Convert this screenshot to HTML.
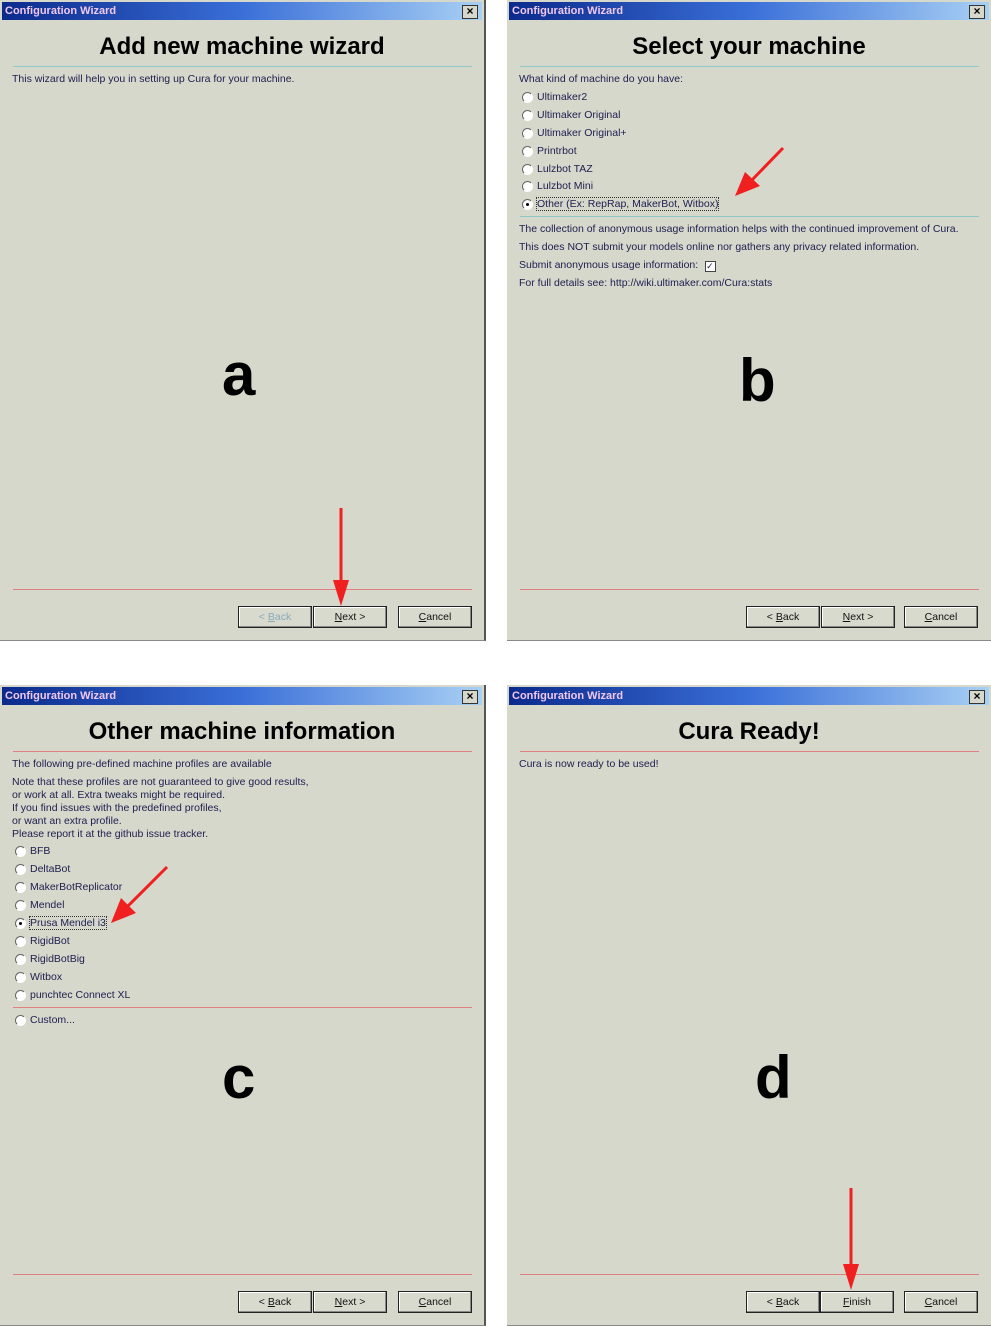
<!DOCTYPE html>
<html><head><meta charset="utf-8"><style>
body{margin:0;width:991px;height:1326px;background:#fff;position:relative;overflow:hidden;font-family:"Liberation Sans",sans-serif;}
.p{position:absolute;width:484px;height:640px;background:#d5d8cb;border-right:2px solid #555;border-bottom:1px solid #888;}
.tb{position:absolute;left:2px;top:2px;right:2px;height:18px;background:linear-gradient(90deg,#0b2a8c,#3a6fd8 50%,#a8d0f4);color:#f0c8f0;font-weight:bold;font-size:11px;line-height:18px;padding-left:3px;}
.x{position:absolute;right:4px;top:3px;width:14px;height:12px;background:#d5d8cb;border:1px solid #333;font-size:12px;line-height:11px;text-align:center;color:#000;font-weight:bold;}
.h{position:absolute;left:0;right:0;text-align:center;font-size:24px;font-weight:bold;color:#000;}
.ln{position:absolute;left:13px;right:12px;height:1px;background:#8cc8c8;}
.rl{position:absolute;left:13px;right:12px;height:1px;background:#e08080;}
.t{position:absolute;font-size:10.5px;color:#202050;white-space:nowrap;}
.r{position:absolute;width:9px;height:9px;border-radius:50%;border:1px solid #666;border-right-color:#fff;border-bottom-color:#fff;background:#fff;}
.r.on::after{content:"";position:absolute;left:3px;top:3px;width:3px;height:3px;background:#000;border-radius:50%;}
.b{position:absolute;width:72px;height:20px;border:1px solid #222;background:#d8dacd;font-size:10.5px;text-align:center;line-height:20px;color:#111;box-shadow:inset -1px -1px #888,inset 1px 1px #fff;}
.big{position:absolute;font-size:60px;font-weight:bold;color:#000;}
.arr{position:absolute;left:0;top:0;}
</style></head><body>

<div class="p" style="left:0;top:0">
<div class="tb">Configuration Wizard<div class="x">×</div></div>
<div class="h" style="top:33px">Add new machine wizard</div>
<div class="ln" style="top:66px"></div>
<div class="t" style="left:12px;top:73px">This wizard will help you in setting up Cura for your machine.</div>
<div class="big" style="left:222px;top:340px">a</div>
<div class="rl" style="top:589px"></div>
<div class="b" style="left:238px;top:606px;color:#8ab">&lt; <u>B</u>ack</div>
<div class="b" style="left:313px;top:606px"><u>N</u>ext &gt;</div>
<div class="b" style="left:398px;top:606px"><u>C</u>ancel</div>
</div>

<div class="p" style="left:507px;top:0">
<div class="tb">Configuration Wizard<div class="x">×</div></div>
<div class="h" style="top:33px">Select your machine</div>
<div class="ln" style="top:66px"></div>
<div class="t" style="left:12px;top:73px">What kind of machine do you have:</div>
<div class="r" style="left:15px;top:92px"></div><div class="t" style="left:30px;top:91px">Ultimaker2</div>
<div class="r" style="left:15px;top:110px"></div><div class="t" style="left:30px;top:109px">Ultimaker Original</div>
<div class="r" style="left:15px;top:128px"></div><div class="t" style="left:30px;top:127px">Ultimaker Original+</div>
<div class="r" style="left:15px;top:146px"></div><div class="t" style="left:30px;top:145px">Printrbot</div>
<div class="r" style="left:15px;top:164px"></div><div class="t" style="left:30px;top:163px">Lulzbot TAZ</div>
<div class="r" style="left:15px;top:181px"></div><div class="t" style="left:30px;top:180px">Lulzbot Mini</div>
<div class="r on" style="left:15px;top:199px"></div><div class="t" style="left:30px;top:198px;outline:1px dotted #333">Other (Ex: RepRap, MakerBot, Witbox)</div>
<div class="ln" style="top:216px"></div>
<div class="t" style="left:12px;top:223px">The collection of anonymous usage information helps with the continued improvement of Cura.</div>
<div class="t" style="left:12px;top:241px">This does NOT submit your models online nor gathers any privacy related information.</div>
<div class="t" style="left:12px;top:259px">Submit anonymous usage information: <span style="display:inline-block;width:9px;height:9px;border:1px solid #444;background:#fff;font-size:9px;line-height:9px;vertical-align:-1px;margin-left:4px">✓</span></div>
<div class="t" style="left:12px;top:277px">For full details see: http://wiki.ultimaker.com/Cura:stats</div>
<div class="big" style="left:232px;top:346px">b</div>
<div class="rl" style="top:589px"></div>
<div class="b" style="left:239px;top:606px">&lt; <u>B</u>ack</div>
<div class="b" style="left:314px;top:606px"><u>N</u>ext &gt;</div>
<div class="b" style="left:397px;top:606px"><u>C</u>ancel</div>
</div>

<div class="p" style="left:0;top:685px">
<div class="tb">Configuration Wizard<div class="x">×</div></div>
<div class="h" style="top:33px">Other machine information</div>
<div class="rl" style="top:66px"></div>
<div class="t" style="left:12px;top:73px">The following pre-defined machine profiles are available</div>
<div class="t" style="left:12px;top:91px;line-height:13px">Note that these profiles are not guaranteed to give good results,<br>or work at all. Extra tweaks might be required.<br>If you find issues with the predefined profiles,<br>or want an extra profile.<br>Please report it at the github issue tracker.</div>
<div class="r" style="left:15px;top:161px"></div><div class="t" style="left:30px;top:160px">BFB</div>
<div class="r" style="left:15px;top:179px"></div><div class="t" style="left:30px;top:178px">DeltaBot</div>
<div class="r" style="left:15px;top:197px"></div><div class="t" style="left:30px;top:196px">MakerBotReplicator</div>
<div class="r" style="left:15px;top:215px"></div><div class="t" style="left:30px;top:214px">Mendel</div>
<div class="r on" style="left:15px;top:233px"></div><div class="t" style="left:30px;top:232px;outline:1px dotted #333">Prusa Mendel i3</div>
<div class="r" style="left:15px;top:251px"></div><div class="t" style="left:30px;top:250px">RigidBot</div>
<div class="r" style="left:15px;top:269px"></div><div class="t" style="left:30px;top:268px">RigidBotBig</div>
<div class="r" style="left:15px;top:287px"></div><div class="t" style="left:30px;top:286px">Witbox</div>
<div class="r" style="left:15px;top:305px"></div><div class="t" style="left:30px;top:304px">punchtec Connect XL</div>
<div class="rl" style="top:322px"></div>
<div class="r" style="left:15px;top:330px"></div><div class="t" style="left:30px;top:329px">Custom...</div>
<div class="big" style="left:222px;top:358px">c</div>
<div class="rl" style="top:589px"></div>
<div class="b" style="left:238px;top:606px">&lt; <u>B</u>ack</div>
<div class="b" style="left:313px;top:606px"><u>N</u>ext &gt;</div>
<div class="b" style="left:398px;top:606px"><u>C</u>ancel</div>
</div>

<div class="p" style="left:507px;top:685px">
<div class="tb">Configuration Wizard<div class="x">×</div></div>
<div class="h" style="top:33px">Cura Ready!</div>
<div class="rl" style="top:66px"></div>
<div class="t" style="left:12px;top:73px">Cura is now ready to be used!</div>
<div class="big" style="left:248px;top:358px">d</div>
<div class="rl" style="top:589px"></div>
<div class="b" style="left:239px;top:606px">&lt; <u>B</u>ack</div>
<div class="b" style="left:313px;top:606px"><u>F</u>inish</div>
<div class="b" style="left:397px;top:606px"><u>C</u>ancel</div>
</div>

<svg class="arr" width="991" height="1326" viewBox="0 0 991 1326">
<g stroke="#f02020" stroke-width="3" fill="#f02020">
<line x1="341" y1="508" x2="341" y2="585"/>
<line x1="783" y1="148" x2="752" y2="180"/>
<line x1="167" y1="867" x2="128" y2="906"/>
<line x1="851" y1="1188" x2="851" y2="1268"/>
</g>
<g fill="#f02020">
<polygon points="333,580 349,580 341,606"/>
<polygon points="745,172 760,186 735,196"/>
<polygon points="121,898 136,913 111,923"/>
<polygon points="843,1264 859,1264 851,1290"/>
</g>
</svg>
</body></html>
